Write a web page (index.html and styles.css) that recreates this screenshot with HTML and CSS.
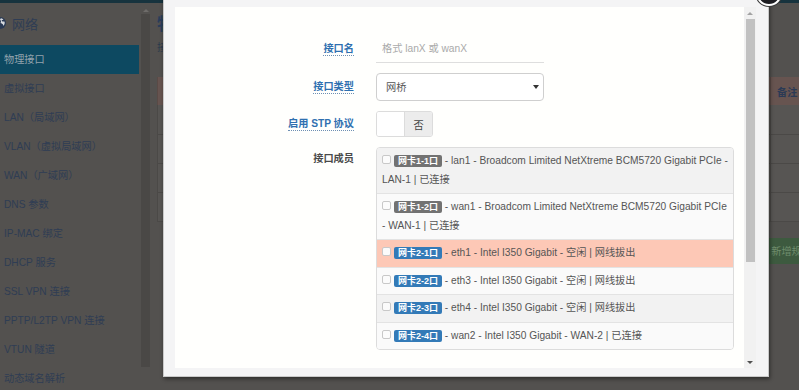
FILE: index.html
```html
<!DOCTYPE html>
<html lang="zh-CN">
<head>
<meta charset="utf-8">
<title>物理接口</title>
<link rel="stylesheet" href="styles.css">
</head>
<body>
<div class="page">
  <div class="topbar"></div>
  <div class="layout">
    <aside class="sidebar">
      <nav class="side-menu">
        <div class="side-title">
          <svg class="globe" viewBox="0 0 12 12" width="12" height="12"><circle cx="6" cy="6" r="6" fill="#2a3a55"/><path d="M3 2.5c1 .2 1.6.9 1.4 1.8-.2.7-1 .8-1 1.6 0 .8.8 1.2.7 2-.1.6-.7.9-1.2.8C1.9 8 1.3 6.4 1.6 4.8 1.8 3.8 2.3 3 3 2.5zM7.2 1.3c.9.2 1.6.7 2.2 1.4-.6.3-1.2.1-1.6.5-.4.4 0 1.1.6 1.3.8.2 1.6-.1 2.2.3.3 1.5-.2 3-1.3 4-.4-.6-.2-1.4-.8-1.8-.6-.4-1.5-.2-1.8-.9-.3-.7.4-1.3.3-2-.1-.7-.9-.9-.9-1.6 0-.5.5-1 1.1-1.2z" fill="#d6d9de"/></svg>
          <span>网络</span>
        </div>
        <a class="side-item active">物理接口</a>
        <a class="side-item">虚拟接口</a>
        <a class="side-item">LAN（局域网）</a>
        <a class="side-item">VLAN（虚拟局域网）</a>
        <a class="side-item">WAN（广域网）</a>
        <a class="side-item">DNS 参数</a>
        <a class="side-item">IP-MAC 绑定</a>
        <a class="side-item">DHCP 服务</a>
        <a class="side-item">SSL VPN 连接</a>
        <a class="side-item">PPTP/L2TP VPN 连接</a>
        <a class="side-item">VTUN 隧道</a>
        <a class="side-item">动态域名解析</a>
      </nav>
      <div class="side-scroll">
        <span class="side-arrow"></span>
        <span class="side-track"></span>
      </div>
    </aside>
    <main class="main">
      <h2 class="main-title">物理接口</h2>
      <p class="main-sub">接口列表</p>
      <table class="grid">
        <colgroup>
          <col class="c1"><col class="c2"><col class="c3"><col class="c4"><col class="c5"><col class="c6"><col class="c7">
        </colgroup>
        <thead>
          <tr><th>接口名</th><th>类型</th><th>MAC 地址</th><th>IP 地址</th><th>状态</th><th>成员</th><th>备注</th></tr>
        </thead>
        <tbody>
          <tr><td>lan1</td><td>物理</td><td></td><td></td><td></td><td></td><td></td></tr>
          <tr><td>wan1</td><td>物理</td><td></td><td></td><td></td><td></td><td></td></tr>
          <tr><td>eth1</td><td>物理</td><td></td><td></td><td></td><td></td><td></td></tr>
          <tr><td>eth3</td><td>物理</td><td></td><td></td><td></td><td></td><td></td></tr>
        </tbody>
      </table>
      <div class="actions"><button class="btn-add" type="button">新增规则</button></div>
    </main>
  </div>
</div>

<div class="modal">
  <span class="modal-close"></span>
  <div class="modal-body">
    <form class="form">
      <label class="form-label"><span class="tip">接口名</span></label>
      <input class="text-input" type="text" placeholder="格式 lanX 或 wanX">

      <label class="form-label"><span class="tip">接口类型</span></label>
      <div class="select-wrap"><select class="select"><option>网桥</option></select></div>

      <label class="form-label"><span class="tip">启用 STP 协议</span></label>
      <div class="switch"><span class="switch-on"></span><span class="switch-off">否</span></div>

      <label class="form-label plain">接口成员</label>
      <ul class="members">
        <li class="member odd"><input type="checkbox" class="chk"><span class="badge gray">网卡1-1口</span> - lan1 - Broadcom Limited NetXtreme BCM5720 Gigabit PCIe - LAN-1 | 已连接</li>
        <li class="member"><input type="checkbox" class="chk"><span class="badge gray">网卡1-2口</span> - wan1 - Broadcom Limited NetXtreme BCM5720 Gigabit PCIe - WAN-1 | 已连接</li>
        <li class="member hot"><input type="checkbox" class="chk"><span class="badge blue">网卡2-1口</span> - eth1 - Intel I350 Gigabit - 空闲 | 网线拔出</li>
        <li class="member"><input type="checkbox" class="chk"><span class="badge blue">网卡2-2口</span> - eth3 - Intel I350 Gigabit - 空闲 | 网线拔出</li>
        <li class="member odd"><input type="checkbox" class="chk"><span class="badge blue">网卡2-3口</span> - eth4 - Intel I350 Gigabit - 空闲 | 网线拔出</li>
        <li class="member"><input type="checkbox" class="chk"><span class="badge blue">网卡2-4口</span> - wan2 - Intel I350 Gigabit - WAN-2 | 已连接</li>
      </ul>
    </form>
    <div class="vscroll">
      <span class="vs-up"></span>
      <span class="vs-track"><span class="vs-thumb"></span></span>
      <span class="vs-down"></span>
    </div>
  </div>
</div>
</body>
</html>
```
FILE: styles.css
```css
* { box-sizing: border-box; }
html, body { margin: 0; padding: 0; }
body {
  width: 799px;
  height: 390px;
  overflow: hidden;
  background: #53514f;
  font-family: "Liberation Sans", "Noto Sans CJK SC", sans-serif;
  font-size: 10.2px;
  color: #555;
}
.page { height: 390px; }
.topbar { height: 3px; background: #17333e; }
.layout { display: flex; align-items: flex-start; }

/* sidebar (dimmed under the shade) */
.sidebar { display: flex; flex-shrink: 0; width: 150px; height: 387px; overflow: hidden; }
.side-menu { width: 139px; flex-shrink: 0; display: flex; flex-direction: column; }
.side-title {
  flex-shrink: 0;
  height: 40px;
  margin-bottom: 2px;
  display: flex;
  align-items: center;
  gap: 6px;
  font-size: 13px;
  color: #2f3d54;
}
.globe { margin-left: -6px; }
.side-item {
  flex-shrink: 0;
  display: block;
  height: 29px;
  line-height: 29px;
  padding-left: 4px;
  color: #2f3d54;
  white-space: nowrap;
}
.side-item.active { background: #0d4961; color: #93a3ad; }
.side-scroll {
  width: 9px;
  flex-shrink: 0;
  margin-left: 2px;
  display: flex;
  flex-direction: column;
  align-items: center;
  padding-top: 6px;
}
.side-arrow {
  width: 0; height: 0;
  border-left: 3px solid transparent;
  border-right: 3px solid transparent;
  border-bottom: 3px solid #6e6c6a;
  margin-bottom: 2px;
}
.side-track { width: 9px; height: 353px; background: #4a4846; }

/* main page behind modal */
.main { margin-left: 7px; flex-shrink: 0; width: 669px; padding-top: 12px; }
.main-title {
  margin: 0;
  font-size: 17px;
  line-height: 20px;
  font-weight: bold;
  color: #2a3d5a;
}
.main-sub { margin: 6px 0 22px; line-height: 14px; color: #2c3a4c; }
.grid { width: 100%; border-collapse: collapse; table-layout: fixed; }
.c1 { width: 90px; } .c2 { width: 80px; } .c3 { width: 130px; } .c4 { width: 120px; }
.c5 { width: 100px; } .c6 { width: 93px; } .c7 { width: 56px; }
.grid th {
  height: 28px;
  background: #675450;
  color: #2b3a55;
  font-weight: bold;
  text-align: left;
  padding: 0 6px;
  border-left: 1px solid #5a4a46;
}
.grid td {
  height: 29px;
  background: #575553;
  border-bottom: 1px solid #4b4947;
  border-left: 1px solid #4b4947;
  color: #2f3d54;
  padding: 0 6px;
}
.actions { display: flex; justify-content: flex-end; margin-top: 16px; }
.btn-add {
  height: 26px;
  padding: 0 14px;
  border: 0;
  border-radius: 2px;
  background: #3d5a3f;
  color: #6f8d6c;
  font: inherit;
}

/* modal */
.modal {
  position: fixed;
  left: 163px;
  top: -30px;
  width: 606px;
  height: 407px;
  padding: 36px 12px 10px 11px;
  background: #f4f4f5;
  border: 1px solid #c9c9c9;
  box-shadow: 1px 2px 4px rgba(0, 0, 0, 0.45);
}
.modal-close {
  position: absolute;
  left: 592px;
  top: 9px;
  width: 26px;
  height: 26px;
  border-radius: 50%;
  background: #1d1d22;
  border: 2px solid #fff;
  box-shadow: 0 0 0 1px #3a3a3a;
}
.modal-body {
  display: flex;
  height: 361px;
  background: #fffffd;
  overflow: hidden;
}
.form {
  flex: 1;
  display: grid;
  grid-template-columns: 179px 358px;
  grid-template-rows: 28px 28px 26px auto;
  column-gap: 22px;
  row-gap: 10px;
  align-content: start;
  padding-top: 28px;
}
.form-label {
  align-self: center;
  text-align: right;
  font-weight: bold;
  line-height: 14px;
}
.tip {
  color: #2f70b0;
  border-bottom: 1px dotted #6e8fb3;
  padding-bottom: 1px;
}
.form-label.plain {
  align-self: start;
  color: #4a4a4a;
  padding-top: 5px;
}
.text-input {
  width: 168px;
  height: 28px;
  margin: 0;
  border: 0;
  border-bottom: 1px solid #dedede;
  background: transparent;
  padding: 0 6px;
  font: inherit;
  color: #555;
  outline: none;
}
.text-input::placeholder { color: #aaa; }
.select-wrap { position: relative; width: 168px; }
.select {
  width: 168px;
  height: 28px;
  margin: 0;
  padding: 0 9px;
  border: 1px solid #cfcfcf;
  border-radius: 4px;
  background: #fff;
  font: inherit;
  color: #555;
  -webkit-appearance: none;
  appearance: none;
}
.select-wrap::after {
  content: "";
  position: absolute;
  right: 5px;
  top: 12px;
  border-left: 3px solid transparent;
  border-right: 3px solid transparent;
  border-top: 4px solid #333;
}
.switch {
  width: 57px;
  height: 26px;
  display: flex;
  border: 1px solid #dcdcdc;
  border-radius: 3px;
  overflow: hidden;
}
.switch-on { width: 28px; background: #fff; border-right: 1px solid #dcdcdc; }
.switch-off {
  flex: 1;
  background: #ececec;
  display: flex;
  align-items: center;
  justify-content: center;
  color: #444;
}
.members {
  list-style: none;
  margin: 0;
  padding: 0;
  width: 358px;
  border: 1px solid #dcdcdc;
  border-radius: 4px;
  overflow: hidden;
}
.member {
  padding: 4px 2px 4px 5px;
  line-height: 18.5px;
  border-top: 1px solid #e3e3e3;
  background: #fafafa;
  color: #555;
}
.member:first-child { border-top: 0; }
.member.odd { background: #f2f2f2; }
.member.hot { background: #fdc8b6; }
.chk {
  -webkit-appearance: none;
  appearance: none;
  width: 9px;
  height: 9px;
  margin: 0 3px 0 0;
  border: 1px solid #c8c8c8;
  border-radius: 2px;
  background: #fbfbfb;
  vertical-align: 0;
}
.badge {
  display: inline-block;
  font-size: 9px;
  font-weight: bold;
  line-height: 12px;
  padding: 0 4px;
  border-radius: 2px;
  color: #fff;
  vertical-align: 0;
}
.badge.gray { background: #727272; }
.badge.blue { background: #337ab7; }

/* modal scrollbar */
.vscroll {
  width: 12px;
  display: flex;
  flex-direction: column;
  align-items: center;
  background: #f1f1f1;
}
.vs-up, .vs-down {
  height: 12px;
  width: 12px;
  display: flex;
  align-items: center;
  justify-content: center;
}
.vs-up::before {
  content: "";
  border-left: 3px solid transparent;
  border-right: 3px solid transparent;
  border-bottom: 3px solid #a3a3a3;
}
.vs-down::before {
  content: "";
  border-left: 3px solid transparent;
  border-right: 3px solid transparent;
  border-top: 3px solid #505050;
}
.vs-track { flex: 1; width: 12px; display: flex; justify-content: center; }
.vs-thumb { width: 9px; height: 243px; background: #c1c1c1; }
```
